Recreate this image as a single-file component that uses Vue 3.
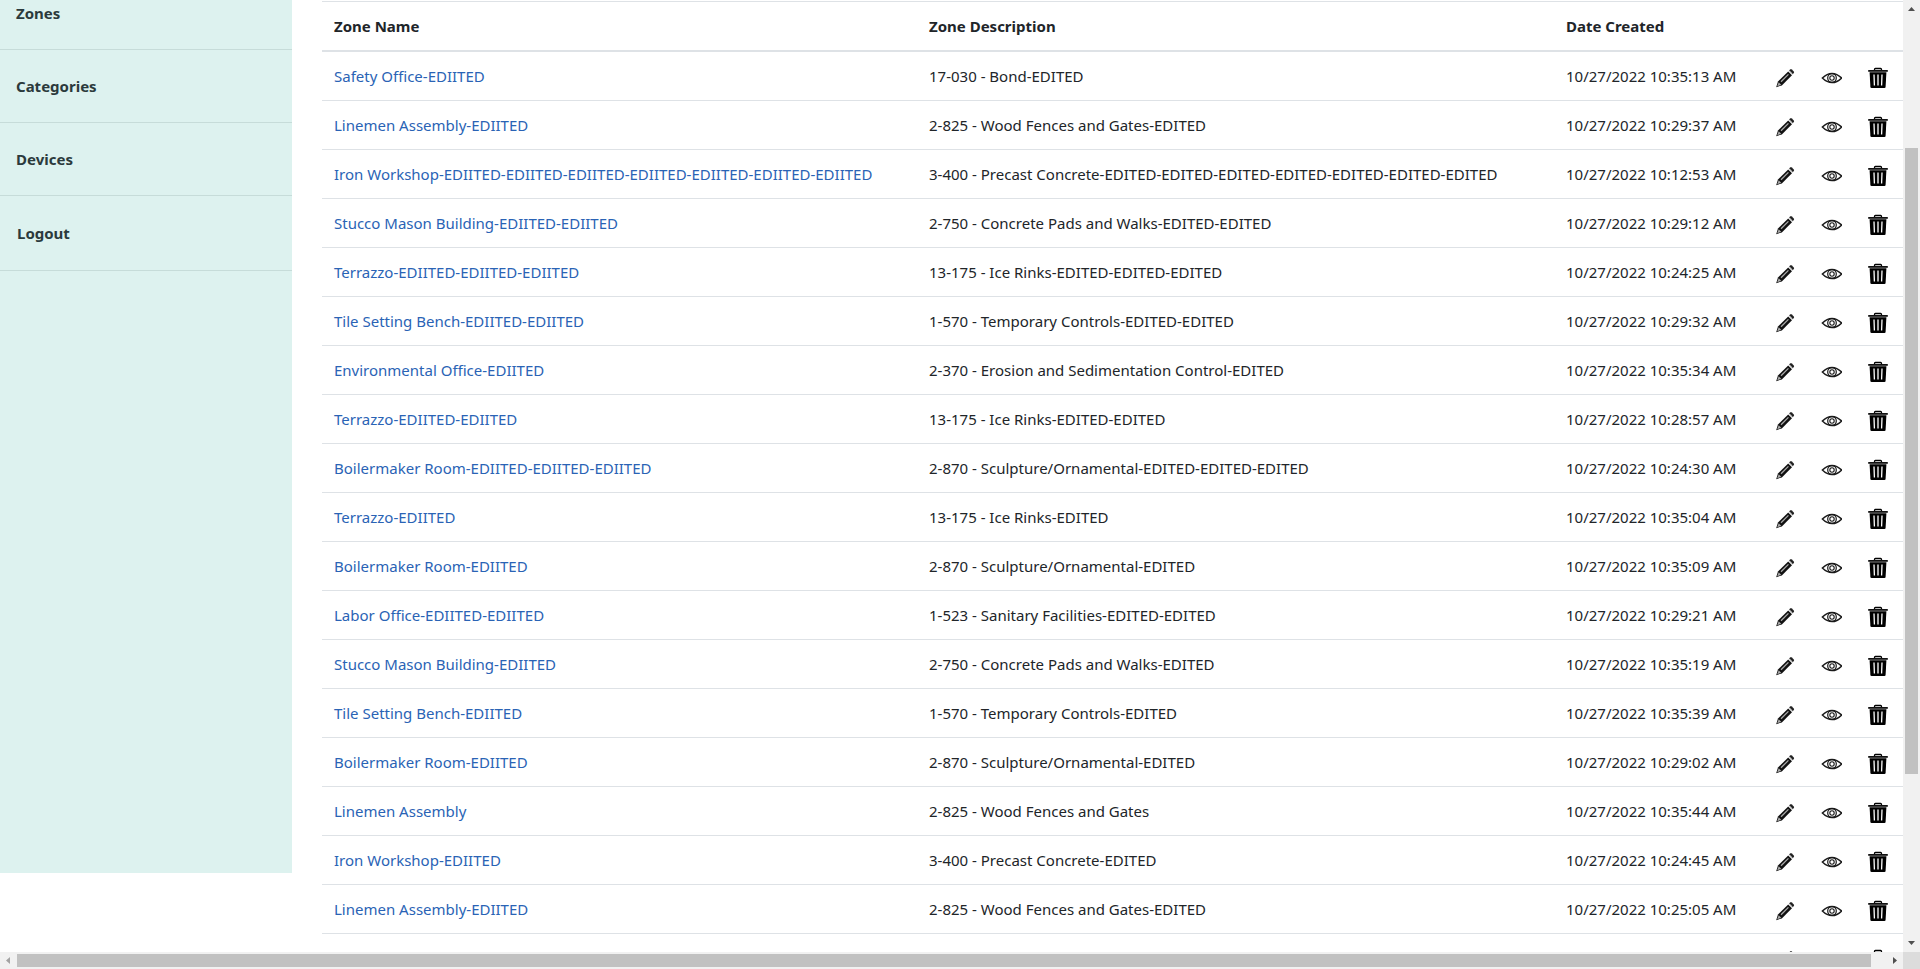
<script setup>
const menu = ['Zones', 'Categories', 'Devices', 'Logout']

const E = '-EDIITED'
const D = '-EDITED'

const zones = [
  ['Safety Office' + E, '17-030 - Bond' + D, '10:35:13'],
  ['Linemen Assembly' + E, '2-825 - Wood Fences and Gates' + D, '10:29:37'],
  ['Iron Workshop' + E.repeat(7), '3-400 - Precast Concrete' + D.repeat(7), '10:12:53'],
  ['Stucco Mason Building' + E.repeat(2), '2-750 - Concrete Pads and Walks' + D.repeat(2), '10:29:12'],
  ['Terrazzo' + E.repeat(3), '13-175 - Ice Rinks' + D.repeat(3), '10:24:25'],
  ['Tile Setting Bench' + E.repeat(2), '1-570 - Temporary Controls' + D.repeat(2), '10:29:32'],
  ['Environmental Office' + E, '2-370 - Erosion and Sedimentation Control' + D, '10:35:34'],
  ['Terrazzo' + E.repeat(2), '13-175 - Ice Rinks' + D.repeat(2), '10:28:57'],
  ['Boilermaker Room' + E.repeat(3), '2-870 - Sculpture/Ornamental' + D.repeat(3), '10:24:30'],
  ['Terrazzo' + E, '13-175 - Ice Rinks' + D, '10:35:04'],
  ['Boilermaker Room' + E, '2-870 - Sculpture/Ornamental' + D, '10:35:09'],
  ['Labor Office' + E.repeat(2), '1-523 - Sanitary Facilities' + D.repeat(2), '10:29:21'],
  ['Stucco Mason Building' + E, '2-750 - Concrete Pads and Walks' + D, '10:35:19'],
  ['Tile Setting Bench' + E, '1-570 - Temporary Controls' + D, '10:35:39'],
  ['Boilermaker Room' + E, '2-870 - Sculpture/Ornamental' + D, '10:29:02'],
  ['Linemen Assembly', '2-825 - Wood Fences and Gates', '10:35:44'],
  ['Iron Workshop' + E, '3-400 - Precast Concrete' + D, '10:24:45'],
  ['Linemen Assembly' + E, '2-825 - Wood Fences and Gates' + D, '10:25:05'],
  ['', '', ''],
]
</script>

<template>
  <div class="window">
    <div class="page">
      <nav class="sidebar" aria-label="Main">
        <a v-for="item in menu" :key="item" href="#" class="menu-item">{{ item }}</a>
      </nav>
      <main class="content">
        <table class="zones">
          <colgroup>
            <col class="col-name" />
            <col />
            <col class="col-date" />
            <col class="col-edit" />
            <col class="col-view" />
            <col class="col-delete" />
          </colgroup>
          <thead>
            <tr>
              <th scope="col">Zone Name</th>
              <th scope="col">Zone Description</th>
              <th scope="col">Date Created</th>
              <th></th>
              <th></th>
              <th></th>
            </tr>
          </thead>
          <tbody>
            <tr v-for="(zone, i) in zones" :key="i">
              <td><a v-if="zone[0]" href="#" class="zone-link">{{ zone[0] }}</a></td>
              <td>{{ zone[1] }}</td>
              <td><template v-if="zone[2]">10/27/2022 {{ zone[2] }} AM</template></td>
              <td>
                <button type="button" class="action" aria-label="Edit">
                  <svg viewBox="0 0 22 22" width="22" height="22">
                    <path d="M2.2 20.2 4 14.6 14.2 4.4 18 8.2 7.8 18.4Z" fill="#111" />
                    <path d="M3.2 19.2 4.7 15.2 7.2 17.7Z" fill="#aaa" />
                    <path d="M7 14.8 14.4 7.4" stroke="#aaa" stroke-width="1.3" />
                    <path d="M15 3.6 16.2 2.4Q17 1.8 17.8 2.5L19.8 4.5Q20.5 5.3 19.8 6.1L18.7 7.3Z" fill="#222" />
                    <path d="M15.4 3.8 18.5 6.9" stroke="#aaa" stroke-width="1" />
                  </svg>
                </button>
              </td>
              <td>
                <button type="button" class="action" aria-label="View">
                  <svg viewBox="0 0 22 22" width="22" height="22" fill="none" stroke="#1a1a1a">
                    <path d="M2.4 11Q7 6.4 12 6.4T21.6 11Q17 15.6 12 15.6T2.4 11Z" stroke-width="1.5" />
                    <circle cx="12" cy="11" r="4.3" stroke-width="1.2" />
                    <circle cx="12" cy="11" r="2.2" stroke-width="1.1" />
                  </svg>
                </button>
              </td>
              <td>
                <button type="button" class="action" aria-label="Delete">
                  <svg viewBox="0 0 22 22" width="22" height="22">
                    <path d="M7.5 3V2.4Q7.5 1.5 8.4 1.5H13.6Q14.5 1.5 14.5 2.4V3" fill="none" stroke="#000" stroke-width="1.3" />
                    <path d="M1.2 3H20.8V4.8H1.2Z" fill="#111" />
                    <path d="M2.6 5.2H19.4L18.6 20Q18.5 21 17.5 21H4.5Q3.5 21 3.4 20Z" fill="#000" />
                    <path d="M7 7.5 7.4 18.5M11 7.5V18.5M15 7.5 14.6 18.5" stroke="#fff" stroke-width="1.3" />
                  </svg>
                </button>
              </td>
            </tr>
          </tbody>
        </table>
      </main>
    </div>
    <div class="bar bar-y">
      <svg viewBox="0 0 17 17" width="17" height="17"><path d="M5 11 8.5 7 12 11Z" fill="#505050" /></svg>
      <div class="track"><div class="thumb"></div></div>
      <svg viewBox="0 0 17 17" width="17" height="17"><path d="M5 6 8.5 10 12 6Z" fill="#505050" /></svg>
    </div>
    <div class="bar bar-x">
      <svg viewBox="0 0 17 17" width="17" height="17"><path d="M10 5 6 8.5 10 12Z" fill="#a3a3a3" /></svg>
      <div class="track"><div class="thumb"></div></div>
      <svg viewBox="0 0 17 17" width="17" height="17"><path d="M7 5 11 8.5 7 12Z" fill="#505050" /></svg>
    </div>
    <div class="corner"></div>
  </div>
</template>

<style>
body {
  margin: 0;
}
</style>

<style scoped>
.window {
  display: grid;
  grid-template-columns: minmax(0, 1fr) 17px;
  grid-template-rows: minmax(0, 1fr) 17px;
  height: 100vh;
  background: #fff;
  color: #212529;
  font: 15px/24px "Noto Sans", "Open Sans", sans-serif;
}
.page {
  display: flex;
  align-items: flex-start;
  gap: 30px;
  overflow: hidden;
}
.sidebar {
  flex: 0 0 292px;
  height: calc(100vh - 96px);
  background: #ddf2ef;
}
.menu-item {
  display: block;
  padding: 24px 16px;
  border-bottom: 1px solid #c6dcd9;
  color: #2b3a3c;
  font-weight: 700;
  text-decoration: none;
}
.menu-item:first-child {
  padding-top: 1px;
}
.menu-item:last-child {
  padding: 25px 17px;
}
.content {
  flex: 1;
  min-width: 0;
  padding-top: 1px;
}
.zones {
  width: 100%;
  table-layout: fixed;
  border-spacing: 0;
}
.col-name {
  width: 595px;
}
.col-date {
  width: 208px;
}
.col-edit {
  width: 46px;
}
.col-view {
  width: 47px;
}
.col-delete {
  width: 48px;
}
th,
td {
  height: 24px;
  padding: 12px 0 12px 12px;
  text-align: left;
  vertical-align: top;
  white-space: nowrap;
}
th {
  border-top: 1px solid #dee2e6;
  border-bottom: 2px solid #dee2e6;
  font-weight: 700;
}
td {
  border-bottom: 1px solid #dee2e6;
}
.zone-link {
  color: #2a63b5;
  text-decoration: none;
}
.action {
  display: block;
  height: 21px;
  margin: 3px 0 0;
  padding: 0;
  border: 0;
  background: none;
  line-height: 0;
}
.bar {
  display: flex;
  background: #f1f1f1;
}
.bar svg {
  flex: none;
}
.bar-y {
  flex-direction: column;
}
.track {
  flex: 1;
  display: flex;
}
.thumb {
  flex: 1;
  background: #c1c1c1;
}
.bar-y .track {
  flex-direction: column;
  padding: 131px 2px 161px;
}
.bar-x .track {
  padding: 2px 15px 2px 0;
}
.corner {
  background: #dcdcdc;
}
</style>
